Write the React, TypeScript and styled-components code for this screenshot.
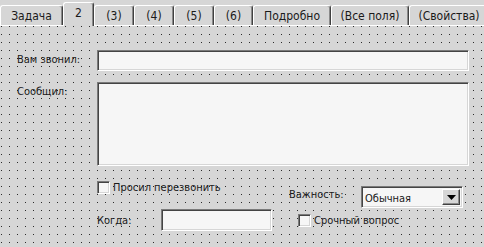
import React from "react";
import styled, {createGlobalStyle} from "styled-components";

const GlobalStyle = createGlobalStyle`
  html, body {
    margin: 0;
    padding: 0;
    background: #d6d6d6;
  }
  * {
    box-sizing: border-box;
  }
`;

const tabs = [
  {label: "Задача", width: 63},
  {label: "2", width: 31, active: true},
  {label: "(3)", width: 40},
  {label: "(4)", width: 40},
  {label: "(5)", width: 40},
  {label: "(6)", width: 39},
  {label: "Подробно", width: 78},
  {label: "(Все поля)", width: 78},
  {label: "(Свойства)", width: 80},
];

function App() {
  return (
    <Page>
      <GlobalStyle />
      <TabBar>
        {tabs.map((t) => (
          <Tab key={t.label} $w={t.width} $active={!!t.active}>
            {t.label}
          </Tab>
        ))}
      </TabBar>
      <Panel>
        <FormRow>
          <Label>Вам звонил:</Label>
          <TextInput $h={21} />
        </FormRow>
        <FormRow>
          <Label>Сообщил:</Label>
          <TextArea />
        </FormRow>
        <Bottom>
          <BottomRow>
            <Left>
              <CheckLine $top>
                <Check />
                Просил перезвонить
              </CheckLine>
            </Left>
            <Right>
              <SmallLabel $w={72}>Важность:</SmallLabel>
              <Select>
                <SelectText>Обычная</SelectText>
                <DropBtn>
                  <svg width="9" height="5" viewBox="0 0 9 5">
                    <path d="M0 0h9L4.5 5z" fill="#000" />
                  </svg>
                </DropBtn>
              </Select>
            </Right>
          </BottomRow>
          <BottomRow>
            <Left>
              <SmallLabel $w={64}>Когда:</SmallLabel>
              <TextInput $h={22} $w={111} />
            </Left>
            <Right $pad={9}>
              <CheckLine>
                <Check />
                Срочный вопрос
              </CheckLine>
            </Right>
          </BottomRow>
        </Bottom>
      </Panel>
    </Page>
  );
}

export default App;

const Page = styled.div`
  width: 484px;
  height: 247px;
  overflow: hidden;
  background: #d6d6d6;
  font-family: "DejaVu Sans Condensed", "Liberation Sans", Arial, sans-serif;
  font-size: 11px;
  color: #1a1a1a;
  display: flex;
  flex-direction: column;
`;

const TabBar = styled.div`
  display: flex;
  align-items: flex-end;
  height: 25px;
  position: relative;
  z-index: 1;
`;

const Tab = styled.div<{$w: number; $active: boolean}>`
  width: ${(p) => p.$w}px;
  flex: none;
  height: ${(p) => (p.$active ? 24 : 20)}px;
  margin-bottom: ${(p) => (p.$active ? -1 : 0)}px;
  display: flex;
  align-items: center;
  justify-content: center;
  padding-top: ${(p) => (p.$active ? 0 : 1)}px;
  padding-bottom: ${(p) => (p.$active ? 4 : 0)}px;
  font-size: 12px;
  background: #d6d6d6;
  border-top: 1px solid #fff;
  border-left: 1px solid #fff;
  border-right: 1px solid #404040;
  box-shadow: inset -1px 0 #8a8a8a;
  border-radius: 3px 3px 0 0;
  white-space: nowrap;
`;

const Panel = styled.div`
  flex: 1;
  border-top: 1px solid #fff;
  background-color: #d6d6d6;
  background-image: conic-gradient(at 1px 1px, transparent 75%, #2a2a2a 0);
  background-size: 8px 8px;
  background-position: 1px 0;
  padding: 24px 15px 0 17px;
  display: flex;
  flex-direction: column;
  gap: 11px;
`;

const FormRow = styled.div`
  display: flex;
  align-items: flex-start;
`;

const Label = styled.div`
  width: 80px;
  flex: none;
  padding-top: 3px;
  line-height: 14px;
`;

const sunken = `
  background: #f6f6f6;
  border: 1px solid;
  border-color: #7a7a7a #fff #fff #7a7a7a;
  box-shadow: inset 1px 1px #444, inset -1px -1px #d6d6d6;
`;

const TextInput = styled.div<{$h: number; $w?: number}>`
  ${sunken}
  height: ${(p) => p.$h}px;
  width: ${(p) => (p.$w ? `${p.$w}px` : "auto")};
  flex: ${(p) => (p.$w ? "none" : 1)};
`;

const TextArea = styled.div`
  ${sunken}
  flex: 1;
  height: 84px;
`;

const Bottom = styled.div`
  margin-left: 80px;
  margin-top: 4px;
  display: flex;
  flex-direction: column;
  gap: 1px;
`;

const BottomRow = styled.div`
  display: flex;
`;

const Left = styled.div`
  width: 192px;
  flex: none;
  display: flex;
  align-items: center;
`;

const Right = styled.div<{$pad?: number}>`
  display: flex;
  align-items: center;
  padding-left: ${(p) => p.$pad || 0}px;
`;

const CheckLine = styled.label<{$top?: boolean}>`
  display: flex;
  align-items: center;
  gap: 3px;
  align-self: ${(p) => (p.$top ? "flex-start" : "center")};
`;

const Check = styled.span`
  display: inline-block;
  width: 13px;
  height: 13px;
  background: #f6f6f6;
  border: 1px solid;
  border-color: #7a7a7a #fff #fff #7a7a7a;
  box-shadow: inset 1px 1px #444, inset -1px -1px #d6d6d6;
`;

const SmallLabel = styled.div<{$w: number}>`
  width: ${(p) => p.$w}px;
  flex: none;
`;

const Select = styled.div`
  ${sunken}
  width: 102px;
  height: 22px;
  display: flex;
  align-items: stretch;
  padding: 2px;
  margin-top: 5px;
`;

const SelectText = styled.div`
  flex: 1;
  padding-left: 1px;
  display: flex;
  align-items: center;
  padding-top: 2px;
`;

const DropBtn = styled.div`
  width: 18px;
  flex: none;
  background: #d6d6d6;
  border: 1px solid;
  border-color: #fff #404040 #404040 #fff;
  box-shadow: inset -1px -1px #8a8a8a;
  display: flex;
  align-items: center;
  justify-content: center;
`;
